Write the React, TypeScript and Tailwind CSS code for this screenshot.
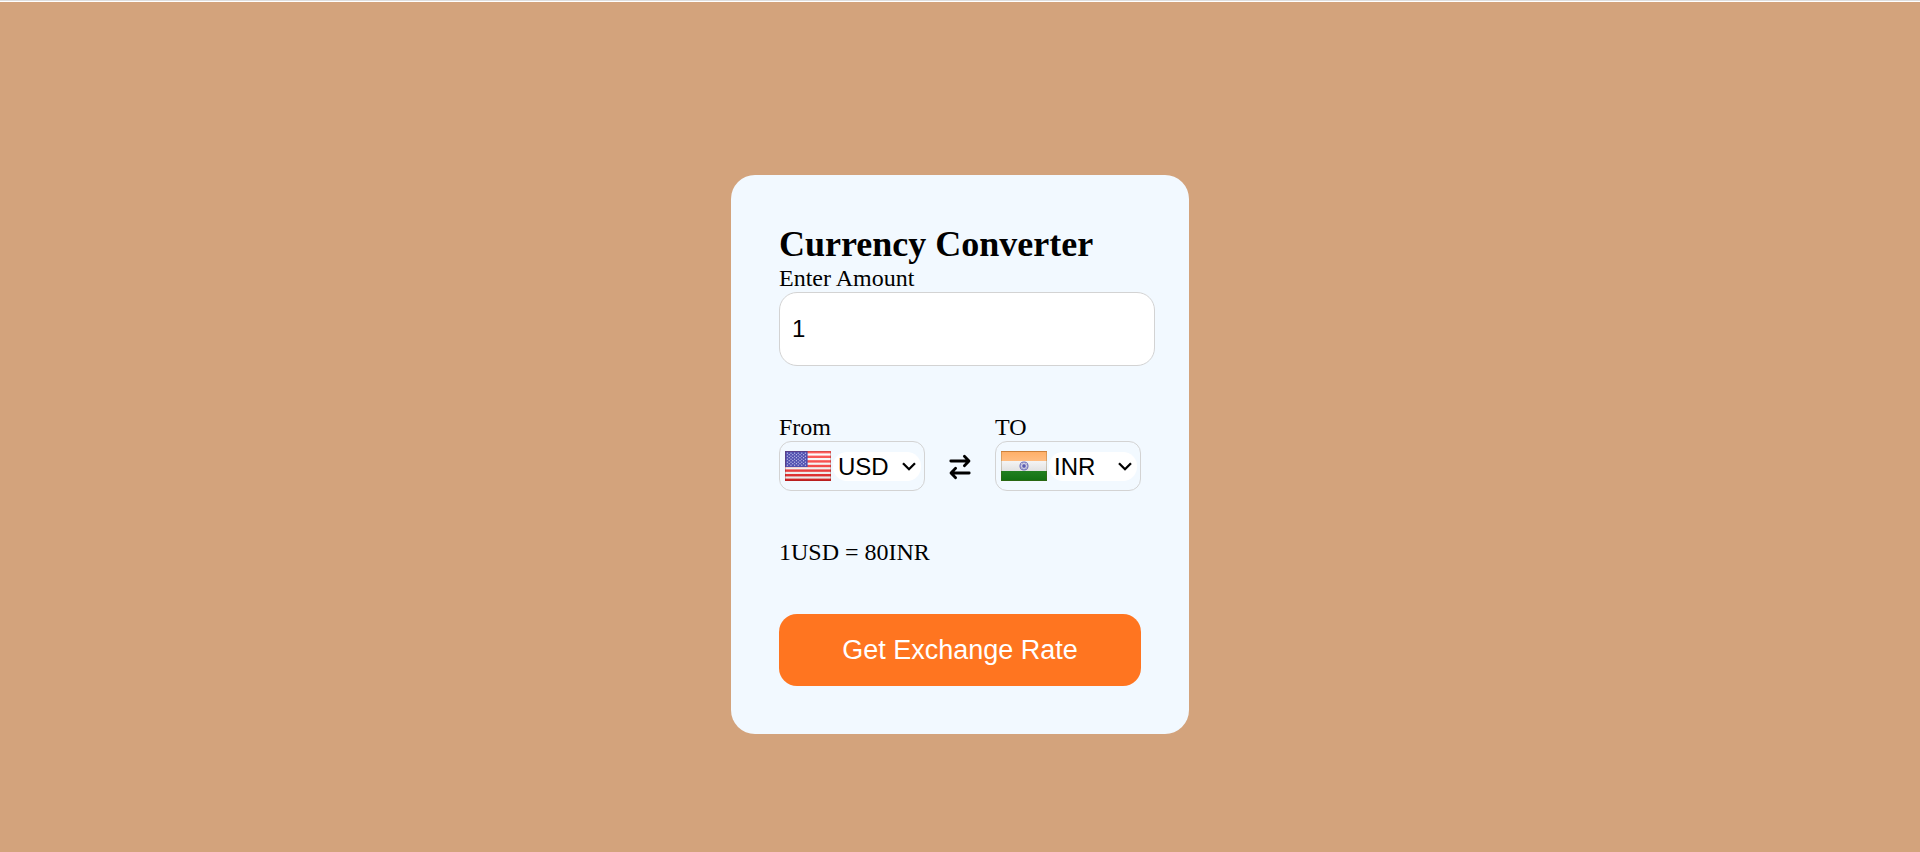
import { useState } from "react";
import type { FormEvent } from "react";

type Currency = "USD" | "INR";

const RATES: Record<Currency, number> = { USD: 1, INR: 80 };

function UsFlag() {
  const stars = [];
  for (let row = 0; row < 5; row++) {
    for (let col = 0; col < 6; col++) {
      stars.push(
        <circle key={`${row}-${col}`} cx={2.4 + col * 3.6} cy={2.2 + row * 3} r={0.65} />,
      );
      if (row < 4 && col < 5) {
        stars.push(
          <circle key={`m${row}-${col}`} cx={4.2 + col * 3.6} cy={3.7 + row * 3} r={0.65} />,
        );
      }
    }
  }
  return (
    <svg viewBox="0 0 46 30" className="h-[30px] w-[46px] shrink-0" role="img" aria-label="United States">
      <defs>
        <linearGradient id="us-red" x1="0" y1="0" x2="0" y2="30" gradientUnits="userSpaceOnUse">
          <stop offset="0" stopColor="#ff6260" />
          <stop offset="0.5" stopColor="#f34a4a" />
          <stop offset="1" stopColor="#cf2222" />
        </linearGradient>
        <linearGradient id="us-white" x1="0" y1="0" x2="0" y2="1">
          <stop offset="0" stopColor="#ffffff" />
          <stop offset="1" stopColor="#e6e6e6" />
        </linearGradient>
      </defs>
      <rect width="46" height="30" fill="url(#us-white)" />
      <g fill="url(#us-red)">
        {[0, 1, 2, 3, 4, 5, 6].map((i) => (
          <rect key={i} y={i * 4.6} width="46" height="2.4" />
        ))}
      </g>
      <rect width="22.6" height="16" fill="#5050b0" />
      <g fill="#c9c9ee">{stars}</g>
      <rect x="0.5" y="0.5" width="45" height="29" fill="none" stroke="#701010" strokeOpacity="0.25" />
    </svg>
  );
}

function IndiaFlag() {
  const spokes = Array.from({ length: 12 }, (_, i) => i * 30);
  return (
    <svg viewBox="0 0 46 30" className="h-[30px] w-[46px] shrink-0" role="img" aria-label="India">
      <defs>
        <linearGradient id="in-saffron" x1="0" y1="0" x2="0" y2="1">
          <stop offset="0" stopColor="#ffae66" />
          <stop offset="1" stopColor="#ffbd82" />
        </linearGradient>
        <linearGradient id="in-white" x1="0" y1="0" x2="0" y2="1">
          <stop offset="0" stopColor="#f4f4f4" />
          <stop offset="1" stopColor="#e2e2e2" />
        </linearGradient>
        <linearGradient id="in-green" x1="0" y1="0" x2="0" y2="1">
          <stop offset="0" stopColor="#218021" />
          <stop offset="1" stopColor="#127012" />
        </linearGradient>
      </defs>
      <rect width="46" height="10" fill="url(#in-saffron)" />
      <rect y="10" width="46" height="10" fill="url(#in-white)" />
      <rect y="20" width="46" height="10" fill="url(#in-green)" />
      <g stroke="#6868b8" fill="none">
        <circle cx="23" cy="15" r="4" strokeWidth="1.1" />
        {spokes.map((a) => (
          <path key={a} d="M23 15V11" strokeWidth="0.4" transform={`rotate(${a} 23 15)`} />
        ))}
      </g>
      <circle cx="23" cy="15" r="1.7" fill="#5a5ab0" />
      <rect x="0.5" y="0.5" width="45" height="29" fill="none" stroke="#6b4a10" strokeOpacity="0.25" />
      <path d="M0 0.5H46" stroke="#c87830" strokeOpacity="0.7" />
    </svg>
  );
}

function SwapIcon() {
  return (
    <svg
      viewBox="0 0 24 24"
      className="size-6 overflow-visible"
      fill="none"
      stroke="currentColor"
      strokeWidth="2.8"
      strokeLinecap="round"
      strokeLinejoin="round"
      aria-hidden="true"
    >
      <path d="M2.8 7H20.6M16.4 2.3L21 7L16.4 11.7" />
      <path d="M21.2 19H3.4M7.6 14.3L3 19L7.6 23.7" />
    </svg>
  );
}

interface CurrencyFieldProps {
  id: string;
  label: string;
  value: Currency;
  onChange: (value: Currency) => void;
}

function CurrencyField({ id, label, value, onChange }: CurrencyFieldProps) {
  return (
    <div className="min-w-0 flex-1">
      <label htmlFor={id} className="block">
        {label}
      </label>
      <div className="flex h-[50px] items-center gap-0.5 rounded-xl border border-[#d3d3d3] pr-[3px] pl-[5px]">
        {value === "USD" ? <UsFlag /> : <IndiaFlag />}
        <div className="relative min-w-0 flex-1">
          <select
            id={id}
            value={value}
            onChange={(e) => onChange(e.target.value as Currency)}
            className="block h-[29px] w-full appearance-none rounded-[14px] bg-white pl-[5px] font-['Liberation_Sans',Arial,sans-serif] text-2xl leading-[29px] text-black"
          >
            <option value="USD">USD</option>
            <option value="INR">INR</option>
          </select>
          <svg
            viewBox="0 0 14 9"
            className="pointer-events-none absolute top-2.5 right-[5px] h-[9px] w-3.5"
            fill="none"
            stroke="#000"
            strokeWidth="2.3"
            aria-hidden="true"
          >
            <path d="M1 1.2L7 7.2L13 1.2" />
          </svg>
        </div>
      </div>
    </div>
  );
}

export default function App() {
  const [amount, setAmount] = useState("1");
  const [from, setFrom] = useState<Currency>("USD");
  const [to, setTo] = useState<Currency>("INR");
  const [message, setMessage] = useState("1USD = 80INR");

  const convert = (e: FormEvent) => {
    e.preventDefault();
    const value = Number(amount) || 1;
    setMessage(`${value}${from} = ${(value * RATES[to]) / RATES[from]}${to}`);
  };

  const swap = () => {
    setFrom(to);
    setTo(from);
  };

  return (
    <div className="border-t border-[#dedede] bg-[#d3a37c] font-['Liberation_Serif','Times_New_Roman',serif] text-2xl leading-[27px] text-black">
      <main className="flex min-h-screen items-start justify-center border-t border-white px-4 pt-[173px] pb-12">
        <form onSubmit={convert} className="flex w-full max-w-[458px] flex-col gap-12 rounded-3xl bg-[#f2f9ff] p-12">
          <div>
            <h1 className="text-4xl leading-[42px] font-bold">Currency Converter</h1>
            <label htmlFor="amount" className="block">
              Enter Amount
            </label>
            <input
              id="amount"
              type="text"
              inputMode="decimal"
              value={amount}
              onChange={(e) => setAmount(e.target.value)}
              className="block h-[74px] w-[calc(100%+14px)] rounded-[18px] border border-[#d3d3d3] bg-white px-3 font-['Liberation_Sans',Arial,sans-serif] text-2xl"
            />
          </div>
          <div className="flex items-end">
            <CurrencyField id="from" label="From" value={from} onChange={setFrom} />
            <button
              type="button"
              onClick={swap}
              aria-label="Swap currencies"
              className="flex h-[50px] w-[70px] shrink-0 items-center justify-center"
            >
              <SwapIcon />
            </button>
            <CurrencyField id="to" label="TO" value={to} onChange={setTo} />
          </div>
          <p>{message}</p>
          <button
            type="submit"
            className="h-[72px] w-full rounded-[18px] bg-[#ff7520] font-['Liberation_Sans',Arial,sans-serif] text-[27px] text-white"
          >
            Get Exchange Rate
          </button>
        </form>
      </main>
    </div>
  );
}
